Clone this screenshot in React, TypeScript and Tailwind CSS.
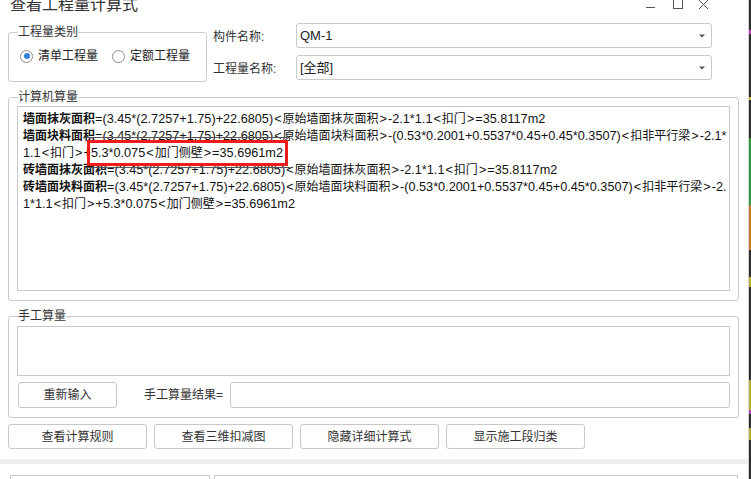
import React from "react";

const FONT = "font-['Liberation_Sans','Noto_Sans_CJK_SC',sans-serif]";

function Radio({ checked, label, className = "" }: { checked?: boolean; label: string; className?: string }) {
  return (
    <div className={`flex items-center gap-[5px] ${className}`}>
      <div className="w-[13px] h-[13px] rounded-full border border-[#8c8c8c] bg-white flex items-center justify-center">
        {checked && <div className="w-[6px] h-[6px] rounded-full bg-[#2f7fdc]" />}
      </div>
      <span className="text-[12px] leading-[16px] text-[#222]">{label}</span>
    </div>
  );
}

function Combo({ value }: { value: string }) {
  return (
    <div className="w-[416px] h-[25px] border border-[#c9c9c9] rounded-[3px] bg-white flex items-center justify-between pl-[3px] pr-[6px]">
      <span className="text-[13px] leading-[16px] text-[#222]">{value}</span>
      <svg width="6" height="4" viewBox="0 0 6 4">
        <path d="M0 0.5 L6 0.5 L3 3.5 Z" fill="#555" />
      </svg>
    </div>
  );
}

function Btn({ label, className = "" }: { label: string; className?: string }) {
  return (
    <div className={`h-full border border-[#c8c8c8] rounded-[3px] bg-white flex items-center justify-center text-[12px] text-[#333] ${className}`}>
      {label}
    </div>
  );
}

function Group({ label, className = "", children }: { label: string; className?: string; children?: React.ReactNode }) {
  return (
    <div className={`relative border border-[#cbcbcb] rounded-[3px] ${className}`}>
      <span className="absolute left-[9px] top-[-8px] bg-white text-[12px] leading-[14px] text-[#333] whitespace-nowrap">{label}</span>
      {children}
    </div>
  );
}

function Runs({ text }: { text: string }) {
  const parts = text.split(/([\u4e00-\u9fff]+|[<>])/).filter(Boolean);
  return (
    <>
      {parts.map((p, i) => {
        if (/[\u4e00-\u9fff]/.test(p)) return <span key={i} className="text-[12px]">{p}</span>;
        if (p === "<" || p === ">") return <span key={i} className="text-[12.7px] mx-[1px]">{p}</span>;
        return <span key={i} className="text-[12.7px]">{p}</span>;
      })}
    </>
  );
}

const lines: { b?: string; t: string }[] = [
  { b: "墙面抹灰面积", t: "=(3.45*(2.7257+1.75)+22.6805)<原始墙面抹灰面积>-2.1*1.1<扣门>=35.8117m2" },
  { b: "墙面块料面积", t: "=(3.45*(2.7257+1.75)+22.6805)<原始墙面块料面积>-(0.53*0.2001+0.5537*0.45+0.45*0.3507)<扣非平行梁>-2.1*" },
  { t: "1.1<扣门>+5.3*0.075<加门侧壁>=35.6961m2" },
  { b: "砖墙面抹灰面积", t: "=(3.45*(2.7257+1.75)+22.6805)<原始墙面抹灰面积>-2.1*1.1<扣门>=35.8117m2" },
  { b: "砖墙面块料面积", t: "=(3.45*(2.7257+1.75)+22.6805)<原始墙面块料面积>-(0.53*0.2001+0.5537*0.45+0.45*0.3507)<扣非平行梁>-2." },
  { t: "1*1.1<扣门>+5.3*0.075<加门侧壁>=35.6961m2" },
];

const strip: { h: number; c: string }[] = [
  { h: 30, c: "bg-[#2d2d2d]" },
  { h: 4, c: "bg-[#c040c0]" },
  { h: 63, c: "bg-[#2d2d2d]" },
  { h: 3, c: "bg-[#c8c030]" },
  { h: 38, c: "bg-[#2d2d2d]" },
  { h: 67, c: "bg-[#2f9a3a]" },
  { h: 45, c: "bg-[#c8782a]" },
  { h: 27, c: "bg-[#2d2d2d]" },
  { h: 10, c: "bg-[#b8b030]" },
  { h: 93, c: "bg-[#2d2d2d]" },
  { h: 30, c: "bg-[#b8b030]" },
  { h: 4, c: "bg-[#c040c0]" },
  { h: 14, c: "bg-[#2d2d2d]" },
  { h: 12, c: "bg-[#b8b030]" },
  { h: 39, c: "bg-[#2d2d2d]" },
];

export default function App() {
  return (
    <div className={`w-[751px] h-[479px] overflow-hidden bg-white flex ${FONT}`}>
      <div className="w-[748px] h-full flex flex-col">
        {/* title bar */}
        <div className="h-[23px] shrink-0 flex items-start">
          <span className="ml-[10px] -mt-[3px] text-[16px] leading-[16px] text-[#333]">查看工程量计算式</span>
          <svg className="ml-auto mr-[38px]" width="66" height="12" viewBox="0 0 66 12">
            <line x1="2" y1="7.5" x2="11" y2="7.5" stroke="#555" strokeWidth="1" />
            <rect x="29.5" y="-2" width="9" height="10.5" fill="none" stroke="#555" strokeWidth="1" />
            <line x1="55" y1="0" x2="64" y2="9" stroke="#555" strokeWidth="1" />
            <line x1="64" y1="0" x2="55" y2="9" stroke="#555" strokeWidth="1" />
          </svg>
        </div>

        {/* top section */}
        <div className="flex items-start pl-[8px] shrink-0">
          <Group label="工程量类别" className="mt-[9px] w-[199px] h-[50px]">
            <div className="flex items-center pl-[11px] pt-[15px]">
              <Radio checked label="清单工程量" />
              <Radio label="定额工程量" className="ml-[14px]" />
            </div>
          </Group>
          <div className="ml-[6px] flex flex-col gap-[7px]">
            <div className="flex items-center h-[25px]">
              <span className="w-[83px] pt-[3px] text-[12px] leading-[14px] text-[#333]">构件名称:</span>
              <Combo value="QM-1" />
            </div>
            <div className="flex items-center h-[25px]">
              <span className="w-[83px] pt-[3px] text-[12px] leading-[14px] text-[#333]">工程量名称:</span>
              <Combo value="[全部]" />
            </div>
          </div>
        </div>

        {/* computer calc */}
        <Group label="计算机算量" className="mt-[15px] ml-[8px] w-[731px] h-[204px] shrink-0 px-[8px] pt-[8px]">
          <div className="relative w-[713px] h-[185px] border border-[#c8c8c8] bg-white pl-[5px] pt-[4px] overflow-hidden">
            {lines.map((l, i) => (
              <div key={i} className="whitespace-nowrap text-[12px] leading-[17px] text-[#111]">
                {l.b && <span className="font-bold text-[12px]">{l.b}</span>}
                <Runs text={l.t} />
              </div>
            ))}
            <div className="absolute left-[67px] top-[30px] w-[205px] h-px bg-[#555]" />
            <div className="absolute left-[67px] top-[60px] w-[205px] h-px bg-[#555]" />
            <div className="absolute left-[69px] top-[33px] w-[201px] h-[26px] border-[3px] border-[#f01c1c]" />
          </div>
        </Group>

        {/* manual calc */}
        <Group label="手工算量" className="mt-[15px] ml-[8px] w-[731px] h-[102px] shrink-0 px-[8px] pt-[9px]">
          <div className="w-full h-[50px] border border-[#c8c8c8] bg-white" />
          <div className="mt-[6px] h-[26px] flex items-center">
            <Btn label="重新输入" className="ml-[1px] w-[99px]" />
            <span className="ml-[27px] w-[86px] text-[12px] text-[#333]">手工算量结果=</span>
            <div className="w-[500px] h-full border border-[#c8c8c8] rounded-[3px] bg-white" />
          </div>
        </Group>

        {/* bottom buttons */}
        <div className="mt-[6px] h-[25px] shrink-0 flex gap-[7px] pl-[8px]">
          <Btn label="查看计算规则" className="w-[139px]" />
          <Btn label="查看三维扣减图" className="w-[139px]" />
          <Btn label="隐藏详细计算式" className="w-[139px]" />
          <Btn label="显示施工段归类" className="w-[139px]" />
        </div>

        <div className="mt-[10px] h-[5px] shrink-0 bg-[#efefef]" />
        <div className="mt-[11px] flex shrink-0">
          <div className="ml-[10px] w-[200px] h-[10px] border-t border-l border-r border-[#c8c8c8]" />
          <div className="ml-[4px] w-[524px] h-[10px] border-t border-l border-r border-[#c8c8c8]" />
        </div>
      </div>
      <div className="w-px h-full bg-[#d4d4d4]" />
      <div className="w-[2px] h-full flex flex-col">
        {strip.map((s, i) => (
          <div key={i} className={`w-full shrink-0 ${s.c}`} style={{ height: s.h }} />
        ))}
      </div>
    </div>
  );
}
